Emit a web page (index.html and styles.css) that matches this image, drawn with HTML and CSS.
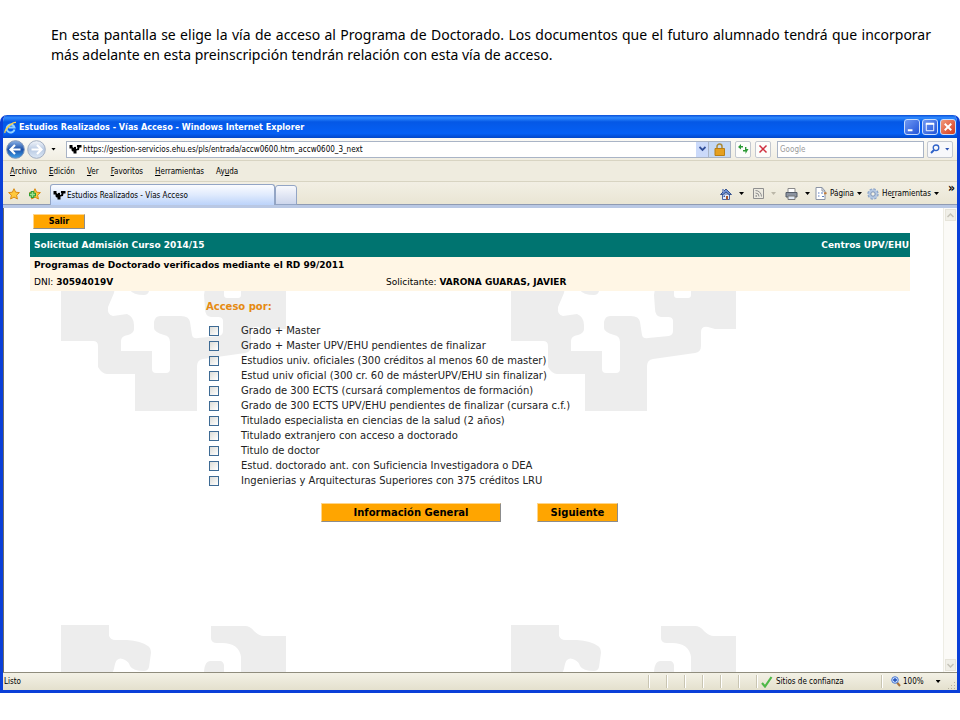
FILE: index.html
```html
<!DOCTYPE html>
<html lang="es">
<head>
    <meta charset="UTF-8">
    <meta name="viewport" content="width=device-width, initial-scale=1.0">
    <title>Estudios Realizados - Vías Acceso</title>
    <link rel="stylesheet" href="styles.css">
</head>
<body>
    <p class="intro">En esta pantalla se elige la vía de acceso al Programa de Doctorado. Los documentos que el futuro alumnado tendrá que incorporar más adelante en esta preinscripción tendrán relación con esta vía de acceso.</p>

    <div class="window">
        <div class="title-bar">
            <svg width="13" height="13" viewBox="0 0 13 13" fill="none">
                <path d="M10.500 8.500A4 4 0 1 1 10.500 6.500H4.500" stroke="#8fd0ff" stroke-width="2"/>
                <path d="M1 12C0 9 8 1 12 1.500" stroke="#ffd34a" stroke-width="1.300"/>
            </svg>
            <h1>Estudios Realizados - Vías Acceso - Windows Internet Explorer</h1>
            <button class="win-btn" aria-label="Minimizar"><svg width="15" height="15" viewBox="0 0 15 15"><path d="M3 10h5v2H3z" fill="#fff"/></svg></button>
            <button class="win-btn" aria-label="Maximizar"><svg width="15" height="15" viewBox="0 0 15 15"><path d="M3.500 4h8v7.500h-8z" fill="none" stroke="#fff"/><path d="M3 3h9v2H3z" fill="#fff"/></svg></button>
            <button class="win-btn win-close" aria-label="Cerrar"><svg width="15" height="15" viewBox="0 0 15 15"><path d="M4 4l7 7M11 4l-7 7" stroke="#fff" stroke-width="2"/></svg></button>
        </div>

        <div class="address-row">
            <button class="nav-btn" aria-label="Atrás">
                <svg width="19" height="19" viewBox="0 0 19 19">
                    <defs>
                        <linearGradient id="blueBall" x2="0" y2="1"><stop offset="0" stop-color="#8db4e8"/><stop offset=".5" stop-color="#1c50a8"/><stop offset="1" stop-color="#3fa0e8"/></linearGradient>
                        <linearGradient id="paleBall" x2="0" y2="1"><stop offset="0" stop-color="#f4f7fc"/><stop offset=".5" stop-color="#b9cae3"/><stop offset="1" stop-color="#dde9f6"/></linearGradient>
                    </defs>
                    <circle cx="9.500" cy="9.500" r="8.800" fill="url(#blueBall)" stroke="#7d93b8"/>
                    <path d="M9 5L4.500 9.500L9 14M5 9.500h9.500" fill="none" stroke="#fff" stroke-width="2.200"/>
                </svg>
            </button>
            <button class="nav-btn" aria-label="Adelante">
                <svg width="19" height="19" viewBox="0 0 19 19">
                    <circle cx="9.500" cy="9.500" r="8.800" fill="url(#paleBall)" stroke="#a3afc2"/>
                    <path d="M10 5l4.500 4.500L10 14M14 9.500H4.500" fill="none" stroke="#fff" stroke-width="2.200"/>
                </svg>
            </button>
            <button class="arrow nav-arrow" aria-label="Páginas recientes"></button>
            <div class="address">
                <svg width="13" height="12" viewBox="0 0 13 12"><path d="M.5 2H3.500Q3 4.500 4.500 5Q5.500 3 7 4V6Q8.500 6 8.500 4.500Q7.500 3.500 8 2H12.500V4.500H10.500L10 7L7.500 7.500V10.500H4.500V8.500Q2.500 8.500 2.500 7V5.500H.5z"/></svg>
                <input type="text" aria-label="Dirección" value="https://gestion-servicios.ehu.es/pls/entrada/accw0600.htm_accw0600_3_next">
                <button class="drop" aria-label="Mostrar direcciones"><svg width="7" height="6" viewBox="0 0 7 6"><path d="M.5 1l3 3 3-3" fill="none" stroke="#33509a" stroke-width="1.800"/></svg></button>
                <span class="lock"><svg width="11" height="13" viewBox="0 0 11 13"><path d="M3 6V3.500a2.500 2.500 0 0 1 5 0V6" fill="none" stroke="#a98b3c" stroke-width="1.500"/><path d="M1 5.500h9.500v7H1z" fill="#e5a021" stroke="#b97f14"/></svg></span>
            </div>
            <button class="box-btn" aria-label="Actualizar"><svg width="12" height="12" viewBox="0 0 12 12" fill="#2c9a35"><path d="M4 1v2h2v1.500H4v2L1 4zM8 5.500V4h1.500l-.2 2H11.500L8.500 11V8.500H6V7h2z"/></svg></button>
            <button class="box-btn" aria-label="Detener"><svg width="10" height="10" viewBox="0 0 10 10"><path d="M1.500 1.500l7 7M8.500 1.500l-7 7" stroke="#cf3040" stroke-width="1.500"/></svg></button>
            <input class="search" type="text" aria-label="Buscar" placeholder="Google">
            <div class="search-btns">
                <button aria-label="Buscar"><svg width="10" height="10" viewBox="0 0 10 10" fill="none" stroke="#2f62c8"><circle cx="6" cy="3.800" r="2.800" stroke-width="1.300"/><path d="M4 6L1 9" stroke-width="2"/></svg></button>
                <button class="arrow blue" aria-label="Opciones de búsqueda"></button>
            </div>
        </div>

        <div class="menu-row">
            <button><u>A</u>rchivo</button>
            <button><u>E</u>dición</button>
            <button><u>V</u>er</button>
            <button><u>F</u>avoritos</button>
            <button><u>H</u>erramientas</button>
            <button>Ay<u>u</u>da</button>
        </div>

        <div class="tab-row">
            <button class="fav" aria-label="Favoritos"><svg width="12" height="12" viewBox="0 0 12 12"><path d="M6 .7l1.600 3.500 3.800.4-2.800 2.600.8 3.800L6 9.100 2.600 11l.8-3.800L.6 4.600l3.800-.4z" fill="#ffc93c" stroke="#d98a14"/></svg></button>
            <button class="fav" aria-label="Agregar a Favoritos"><svg width="13" height="12" viewBox="0 0 13 12"><path d="M7 .7l1.600 3.500 3.800.4-2.800 2.600.8 3.800L7 9.100 3.600 11l.8-3.800-2.800-2.600 3.800-.4z" fill="#ffc93c" stroke="#d98a14"/><path d="M4.500 3v7M1 6.500h7" stroke="#2f9e36" stroke-width="3.600"/><path d="M4.500 4v5M2 6.500h5" stroke="#9be08f" stroke-width="1.400"/></svg></button>
            <button class="tab">
                <svg width="13" height="12" viewBox="0 0 13 12"><path d="M.5 2H3.500Q3 4.500 4.500 5Q5.500 3 7 4V6Q8.500 6 8.500 4.500Q7.500 3.500 8 2H12.500V4.500H10.500L10 7L7.500 7.500V10.500H4.500V8.500Q2.500 8.500 2.500 7V5.500H.5z"/></svg>
                Estudios Realizados - Vías Acceso
            </button>
            <button class="new-tab" aria-label="Nueva pestaña"></button>
            <div class="commands">
                <button class="cmd" aria-label="Página principal"><svg width="12" height="12" viewBox="0 0 12 12"><path d="M2.500 6v5.500h7V6z" fill="#e7effc" stroke="#4b67a5"/><path d="M.5 6.500L6 1l5.500 5.500H9L6 4 3 6.500z" fill="#6c8fd6" stroke="#38548f"/><path d="M2 1h2v3H2z" fill="#8b9cc4"/><path d="M3.500 7.500h1.500v1.500H3.500z" fill="#3b5ba5"/><path d="M6 8h2v3.500H6z" fill="#a8552b"/></svg><i class="arrow"></i></button>
                <button class="cmd faded" aria-label="Fuentes"><svg width="11" height="11" viewBox="0 0 11 11" fill="none" stroke="#8f8f8f"><path d="M.5.500h10v10H.5z" fill="#eceae0"/><path d="M2.500 5A3.500 3.500 0 0 1 6 8.500M2.500 2.500a6 6 0 0 1 6 6"/><path d="M2.500 8h1.500" stroke-width="1.500"/></svg><i class="arrow"></i></button>
                <button class="cmd" aria-label="Imprimir"><svg width="13" height="12" viewBox="0 0 13 12"><path d="M3 .5h7V5H3z" fill="#fff" stroke="#8a8a8a"/><path d="M1 4.500h11v4.500H1z" fill="#8b93a0" stroke="#555c68"/><path d="M3 8h7v3.500H3z" fill="#dfe8f5" stroke="#777"/></svg><i class="arrow"></i></button>
                <button class="cmd page"><svg width="12" height="13" viewBox="0 0 12 13"><path d="M1 .5h6L10 4v8.500H1z" fill="#fff" stroke="#8b94a5"/><path d="M7 .5V4h3" fill="none" stroke="#8b94a5"/><path d="M3 6h1.500M3 9h1.500M6 6h2" stroke="#5d7fc0"/><path d="M7 9.500h2" stroke="#5d7fc0"/><path d="M9 6.500l2.500-.5" stroke="#c07d3e" stroke-width="2"/></svg>Página<i class="arrow"></i></button>
                <button class="cmd tools"><svg width="12" height="12" viewBox="0 0 12 12"><circle cx="6" cy="6" r="4.500" fill="#b3c7e2" stroke="#8ba4c8" stroke-width="2.400" stroke-dasharray="2.200 1.300"/><circle cx="6" cy="6" r="4.500" fill="#b3c7e2"/><circle cx="6" cy="6" r="2.200" fill="#f3f1e6" stroke="#7d93b5"/></svg><span>He<u>r</u>ramientas</span><i class="arrow"></i></button>
                <button class="more" aria-label="Más">»</button>
            </div>
        </div>

        <div class="viewport">
            <main class="page-content">
                <button class="btn btn-exit">Salir</button>
                <div class="head-bar">
                    <span>Solicitud Admisión Curso 2014/15</span>
                    <span>Centros UPV/EHU</span>
                </div>
                <div class="applicant">
                    <h2>Programas de Doctorado verificados mediante el RD 99/2011</h2>
                    <div class="applicant-data">
                        <span>DNI: <b>30594019V</b></span>
                        <span>Solicitante: <b>VARONA GUARAS, JAVIER</b></span>
                    </div>
                </div>
                <form class="access">
                    <h3>Acceso por:</h3>
                    <label><input type="checkbox">Grado + Master</label>
                    <label><input type="checkbox">Grado + Master UPV/EHU pendientes de finalizar</label>
                    <label><input type="checkbox">Estudios univ. oficiales (300 créditos al menos 60 de master)</label>
                    <label><input type="checkbox">Estud univ oficial (300 cr. 60 de másterUPV/EHU sin finalizar)</label>
                    <label><input type="checkbox">Grado de 300 ECTS (cursará complementos de formación)</label>
                    <label><input type="checkbox">Grado de 300 ECTS UPV/EHU pendientes de finalizar (cursara c.f.)</label>
                    <label><input type="checkbox">Titulado especialista en ciencias de la salud (2 años)</label>
                    <label><input type="checkbox">Titulado extranjero con acceso a doctorado</label>
                    <label><input type="checkbox">Titulo de doctor</label>
                    <label><input type="checkbox">Estud. doctorado ant. con Suficiencia Investigadora o DEA</label>
                    <label><input type="checkbox">Ingenierias y Arquitecturas Superiores con 375 créditos LRU</label>
                </form>
                <div class="actions">
                    <button class="btn btn-info">Información General</button>
                    <button class="btn btn-next">Siguiente</button>
                </div>
            </main>
            <div class="scrollbar">
                <button aria-label="Subir"><svg width="7" height="5" viewBox="0 0 7 5"><path d="M.5 4l3-3 3 3" fill="none" stroke="#c4c2b8" stroke-width="1.500"/></svg></button>
                <button aria-label="Bajar"><svg width="7" height="5" viewBox="0 0 7 5"><path d="M.5 1l3 3 3-3" fill="none" stroke="#c4c2b8" stroke-width="1.500"/></svg></button>
            </div>
        </div>

        <div class="status-bar">
            <span class="status-text">Listo</span>
            <span class="pane"></span>
            <span class="pane"></span>
            <span class="pane"></span>
            <span class="pane"></span>
            <span class="pane"></span>
            <span class="pane"></span>
            <span class="pane zone"><svg width="12" height="12" viewBox="0 0 12 12"><path d="M1 7l3 3.500L10.500 1" fill="none" stroke="#4fb848" stroke-width="2.200"/></svg>Sitios de confianza</span>
            <button class="pane zoom"><svg width="10" height="11" viewBox="0 0 10 11"><path d="M6 6.500L9 10" stroke="#a9713b" stroke-width="2"/><circle cx="4" cy="4" r="3.300" fill="#cfe2ff" stroke="#4c78cf"/><path d="M4 2v4M2 4h4" stroke="#1d4dbb" stroke-width="1.300"/></svg>100%<i class="arrow"></i></button>
            <svg class="grip" width="10" height="10" viewBox="0 0 10 10" fill="#b3af9c"><path d="M8 8h1v1H8zM5 8h1v1H5zM2 8h1v1H2zM8 5h1v1H8zM5 5h1v1H5zM8 2h1v1H8z"/></svg>
        </div>
    </div>
</body>
</html>
```
FILE: styles.css
```css
* {
    box-sizing: border-box;
}
body {
    margin: 0;
    min-height: 100vh;
    display: flex;
    flex-direction: column;
    background: #fff;
    color: #000;
    font-family: "DejaVu Sans Condensed", "DejaVu Sans", sans-serif;
    font-size: 8px;
}
button, input {
    font: inherit;
    color: inherit;
    margin: 0;
    padding: 0;
    border: none;
    background: none;
}
svg {
    display: block;
    flex: none;
}
h1, h2, h3 {
    margin: 0;
    font-size: inherit;
}
.intro {
    margin: 25px 29px 50px 51px;
    font-family: "Noto Sans", sans-serif;
    font-size: 14px;
    line-height: 20px;
    text-align: justify;
}

/* window frame */
.window {
    flex: 1;
    display: flex;
    flex-direction: column;
    margin-bottom: 27px;
    border: 3px solid #0a3fd8;
    border-top: none;
    border-radius: 7px 7px 0 0;
    background: #ece9d8;
    overflow: hidden;
}
.title-bar {
    display: flex;
    align-items: center;
    gap: 2px;
    height: 23px;
    padding: 1px 1px 0 1px;
    color: #fff;
    background: linear-gradient(#0a4fd8, #2f8bff 12%, #0558e6 30%, #0560f5 80%, #0347c8);
}
.title-bar h1 {
    flex: 1;
    font-size: 9px;
}
.win-btn {
    width: 16px;
    height: 16px;
    border: 1px solid #c9dcfb;
    border-radius: 3px;
    background: linear-gradient(135deg, #6f98f2, #2153d8);
}
.win-btn svg {
    width: 14px;
    height: 14px;
}
.win-close {
    background: linear-gradient(135deg, #f09a7c, #d8391a);
}

/* toolbars */
.arrow {
    display: inline-block;
    width: 5px;
    height: 3px;
    background: #000;
    clip-path: polygon(0 0, 100% 0, 50% 100%);
}
.address-row {
    display: flex;
    align-items: center;
    height: 23px;
    padding: 0 4px 0 3px;
    background: linear-gradient(#fbfaf6, #f1eee2);
    border-bottom: 1px solid #d8d4c2;
}
.nav-btn {
    margin-right: 2px;
}
.nav-arrow {
    margin: 0 10px 0 3px;
}
.address {
    flex: 1;
    display: flex;
    align-items: center;
    height: 17px;
    padding-left: 2px;
    border: 1px solid #a9b4c6;
    background: #fff;
}
.address input {
    flex: 1;
    min-width: 0;
    padding-left: 1px;
}
.drop {
    display: grid;
    place-items: center;
    width: 12px;
    height: 15px;
    background: #cbdafa;
}
.lock {
    display: grid;
    place-items: center;
    width: 22px;
    height: 15px;
    background: #c5d9f5;
    border-left: 1px solid #a9b4c6;
}
.box-btn {
    display: grid;
    place-items: center;
    width: 16px;
    height: 17px;
    margin-left: 4px;
    border: 1px solid #c3c8d0;
    border-radius: 2px;
    background: #fdfdfb;
}
.search {
    width: 147px;
    height: 17px;
    margin: 0 3px 0 6px;
    padding-left: 2px;
    border: 1px solid #a9b4c6;
    background: #fff;
}
.search::placeholder {
    color: #9a9a9a;
    opacity: 1;
}
.search-btns {
    display: flex;
    align-items: center;
    justify-content: space-around;
    width: 26px;
    height: 17px;
    border: 1px solid #c3c8d0;
    border-radius: 2px;
    background: #f7f8fb;
}
.blue {
    background: #2a52b4;
}
.menu-row {
    display: flex;
    align-items: center;
    gap: 12px;
    height: 21px;
    padding-left: 7px;
    background: #efecdf;
    border-bottom: 1px solid #d8d4c2;
}
.tab-row {
    display: flex;
    align-items: center;
    height: 26px;
    padding-left: 5px;
    background: linear-gradient(#f2efe4, #e9e5d3);
    border-bottom: 3px solid #b9c8e4;
    box-shadow: inset 0 -1px #8f9bb3;
}
.fav {
    margin-right: 8px;
}
.tab {
    display: flex;
    align-items: center;
    gap: 1px;
    align-self: flex-end;
    width: 225px;
    height: 21px;
    margin-left: 1px;
    padding-left: 2px;
    border: 1px solid #93a5c5;
    border-bottom: none;
    border-radius: 3px 3px 0 0;
    background: linear-gradient(#fbfcff, #dfeafd 50%, #bcd3fa);
}
.new-tab {
    align-self: flex-end;
    width: 22px;
    height: 20px;
    border: 1px solid #93a5c5;
    border-radius: 3px 3px 0 0;
    background: linear-gradient(#f8f9fd, #cdd6ec);
}
.commands {
    flex: 1;
    display: flex;
    align-items: center;
    justify-content: flex-end;
    gap: 9px;
    height: 24px;
    padding-right: 2px;
}
.cmd {
    display: flex;
    align-items: center;
    gap: 7px;
}
.faded .arrow {
    background: #bbb7a8;
}
.page, .tools {
    gap: 3px;
    margin-left: -4px;
}
.more {
    align-self: flex-start;
    font-size: 12px;
    font-weight: bold;
    line-height: 12px;
}

/* web page */
.viewport {
    flex: 1;
    display: flex;
    border-left: 1px solid #716f64;
    background: #fff;
}
.page-content {
    flex: 1;
    padding: 6px 33px 20px 26px;
    font-family: "DejaVu Sans", sans-serif;
    font-size: 10px;
    background: url("data:image/svg+xml,%3Csvg xmlns='http://www.w3.org/2000/svg' width='450' height='376'%3E%3Cpath fill='%23ededed' d='M0 0H48V11Q50 15 54 15H66Q80 16 87 21Q90 23 90 28L88 42Q87 46 83 46Q72 46 69 41Q68 37 64 35Q59 32 56 35Q54 37 53 44L47 58Q46 66 52 67L66 65Q73 68 73 76V80Q73 84 67 86Q60 87 60 92V102H91V120Q91 124 95 124H105Q109 124 109 120V93Q109 87 103 86Q93 83 93 79V73Q94 67 99 67H120Q128 67 129 73L131 86Q132 90 137 89L158 87Q162 86 162 82V72Q162 68 157 68H150Q144 67 144 60L143 46Q144 36 149 36H159Q162 36 163 40V46Q163 49 166 49H177Q180 49 180 46V32Q178 18 161 18H156Q150 18 150 13V1H184Q189 1 193 6Q198 11 203 11H225V80H204L197 78Q190 77 190 83V97Q190 103 184 104L142 110Q136 111 136 117V162H74V125H46Q41 125 37 118V97Q37 92 32 92H0Z'/%3E%3C/svg%3E") 57px 41px;
}
.btn {
    border: 1px solid;
    border-color: #ffd58a #8c8c8c #8c8c8c #ffd58a;
    background: #ffa500;
    font-weight: bold;
}
.btn-exit {
    display: block;
    width: 52px;
    height: 15px;
    margin: 0 0 4px 3px;
    font-size: 8px;
}
.head-bar {
    display: flex;
    align-items: center;
    justify-content: space-between;
    height: 24px;
    padding: 0 1px 0 4px;
    background: #007470;
    color: #fff;
    font-size: 9px;
    font-weight: bold;
}
.applicant {
    background: #fff6e5;
    font-size: 9px;
    line-height: 17px;
}
.applicant h2, .applicant-data span {
    padding-left: 4px;
}
.applicant-data {
    display: grid;
    grid-template-columns: 40% 60%;
}
.access {
    display: flex;
    flex-direction: column;
    align-items: flex-start;
    padding: 8px 0 0 176px;
    color: #222;
}
.access h3 {
    margin-bottom: 8px;
    line-height: 16px;
    color: #e58a12;
}
.access label {
    display: flex;
    align-items: center;
    gap: 22px;
    padding-left: 3px;
    line-height: 15px;
}
.access input {
    appearance: none;
    width: 10px;
    height: 10px;
    border: 1px solid #3d6a94;
    background: linear-gradient(135deg, #dcdcd7, #fff);
}
.access input:checked {
    background: #21a121;
}
.actions {
    display: flex;
    gap: 36px;
    padding: 15px 0 0 291px;
}
.actions .btn {
    height: 19px;
}
.btn-info {
    width: 180px;
}
.btn-next {
    width: 81px;
}
.scrollbar {
    display: flex;
    flex-direction: column;
    justify-content: space-between;
    width: 14px;
    padding: 1px;
    background: #fbfaf7;
    border-left: 1px solid #eeede5;
}
.scrollbar button {
    display: grid;
    place-items: center;
    height: 12px;
    border: 1px solid #e6e4da;
    background: #f0efe8;
}

/* status bar */
.status-bar {
    display: flex;
    align-items: center;
    height: 18px;
    padding-right: 1px;
    border-top: 1px solid #8f8c7d;
    background: linear-gradient(#f3f1e6, #e4e0cd);
}
.status-text {
    flex: 1;
    padding-left: 1px;
}
.pane {
    display: flex;
    align-items: center;
    gap: 3px;
    width: 18px;
    height: 13px;
    border-left: 1px solid #c9c5b2;
    box-shadow: inset 1px 0 #fff;
}
.zone {
    width: 125px;
    padding-left: 4px;
}
.zoom {
    width: 65px;
    padding-left: 9px;
    gap: 2px;
}
.zoom .arrow {
    margin-left: 10px;
}
.grip {
    align-self: flex-end;
}
```
